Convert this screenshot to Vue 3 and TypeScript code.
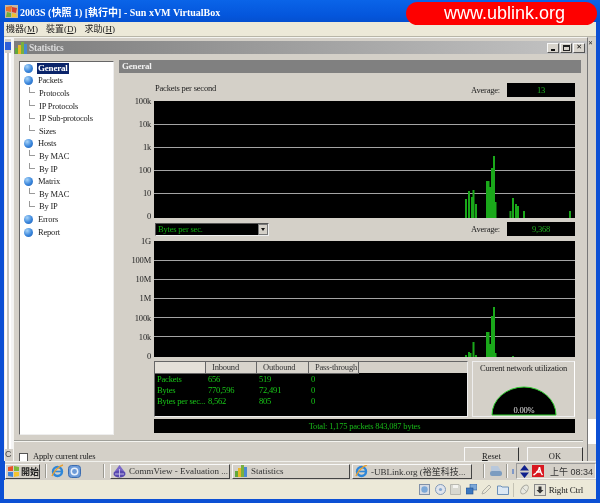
<template>
  <div class="vbox">
    <div class="titlebar">
      <svg class="title-icon" width="13" height="13" viewBox="0 0 13 13">
        <rect width="13" height="13" fill="#c8b8a0" />
        <path d="M1 2 L7 1 L6 7 L1 6 Z" fill="#e8742c" />
        <path d="M7 2 L12 3 L11 8 L7 7 Z" fill="#d83c30" />
        <path d="M2 7 L6 8 L6 12 L1 12 Z" fill="#6fae3c" />
        <path d="M7 8 L11 9 L12 12 L7 12 Z" fill="#f0c030" />
      </svg>
      <span class="title-text">2003S (快照 1) [執行中] - Sun xVM VirtualBox</span>
      <div class="pill">www.ublink.org</div>
    </div>

    <div class="menubar">
      <span v-for="m in menus" :key="m.label" class="menu-item">{{ m.label }}(<u>{{ m.key }}</u>)</span>
    </div>

    <div class="desktop">
      <div class="left-strip">
        <div class="strip-icon"></div>
        <div class="strip-track"></div>
        <div class="strip-c">C</div>
      </div>

      <div class="stats">
        <div class="stats-title">
          <svg width="13" height="12" viewBox="0 0 13 12">
            <rect x="0" y="6" width="3" height="6" fill="#62a83a" />
            <rect x="3" y="3" width="3" height="9" fill="#e8b828" />
            <rect x="6" y="0" width="3" height="12" fill="#78b040" />
            <rect x="9" y="2" width="3" height="10" fill="#4a8ad0" />
          </svg>
          <span class="stats-title-text">Statistics</span>
          <div class="win-buttons">
            <span class="win-btn"><i class="min"></i></span>
            <span class="win-btn"><i class="max"></i></span>
            <span class="win-btn close">✕</span>
          </div>
        </div>

        <div class="stats-body">
          <ul class="tree">
            <li v-for="n in tree" :key="n.id" class="tree-row" :class="{ child: n.child }">
              <span v-if="!n.child" class="bullet"></span>
              <span v-else class="connector"></span>
              <span class="tree-label" :class="{ selected: n.selected }">{{ n.label }}</span>
            </li>
          </ul>

          <div class="main">
            <div class="section-head">General</div>

            <div class="control-row first">
              <span class="chart-title">Packets per second</span>
              <span class="avg-label">Average:</span>
              <span class="avg-box">13</span>
            </div>
            <div class="chart-row chart-a">
              <div class="axis"><span v-for="t in charts[0].ticks" :key="t">{{ t }}</span></div>
              <svg class="plot" width="421" :height="charts[0].height">
                <line v-for="y in charts[0].grid" :key="y" x1="0" x2="421" :y1="y" :y2="y" class="grid" />
                <rect v-for="b in charts[0].bars" :key="b.x" :x="b.x" :y="b.y" :width="b.w" :height="b.h" class="bar" />
              </svg>
            </div>

            <div class="control-row">
              <div class="combo">
                <span>Bytes per sec.</span>
                <span class="combo-btn"><i></i></span>
              </div>
              <span class="avg-label">Average:</span>
              <span class="avg-box">9,368</span>
            </div>
            <div class="chart-row chart-b">
              <div class="axis"><span v-for="t in charts[1].ticks" :key="t">{{ t }}</span></div>
              <svg class="plot" width="421" :height="charts[1].height">
                <line v-for="y in charts[1].grid" :key="y" x1="0" x2="421" :y1="y" :y2="y" class="grid" />
                <rect v-for="b in charts[1].bars" :key="b.x" :x="b.x" :y="b.y" :width="b.w" :height="b.h" class="bar" />
              </svg>
            </div>

            <div class="lower">
              <div class="traffic">
                <div class="traffic-head">
                  <span></span><span>Inbound</span><span>Outbound</span><span>Pass-through</span>
                </div>
                <div v-for="r in traffic" :key="r[0]" class="traffic-row">
                  <span v-for="(c, i) in r" :key="i">{{ c }}</span>
                </div>
              </div>
              <div class="util">
                <div class="util-title">Current network utilization</div>
                <svg class="gauge" width="66" height="30" viewBox="0 0 66 30">
                  <path d="M1 29 A32 28 0 0 1 65 29 Z" fill="#000" stroke="#2fd02f" stroke-width="1" />
                  <text x="33" y="27" text-anchor="middle" class="gauge-text">0.00%</text>
                </svg>
              </div>
            </div>
            <div class="total">Total: 1,175 packets 843,087 bytes</div>
          </div>
        </div>

        <div class="stats-footer">
          <span class="checkbox"></span>
          <span class="apply">Apply current rules</span>
          <button class="btn reset"><u>R</u>eset</button>
          <button class="btn ok">OK</button>
        </div>
      </div>

      <div class="right-strip">
        <span class="back-close">✕</span>
        <div class="back-white"></div>
      </div>
    </div>

    <div class="taskbar">
      <div class="start">
        <svg width="11" height="11" viewBox="0 0 11 11">
          <path d="M0 1 L5 0 L5 5 L0 5 Z" fill="#e8562a" />
          <path d="M6 0 L11 1 L11 5 L6 5 Z" fill="#7cb83a" />
          <path d="M0 6 L5 6 L5 11 L0 10 Z" fill="#3f84d8" />
          <path d="M6 6 L11 6 L11 10 L6 11 Z" fill="#f4c430" />
        </svg>
        <span>開始</span>
      </div>
      <span class="divider first-div"></span>
      <svg class="ql" width="13" height="14" viewBox="0 0 13 14">
        <ellipse cx="6.5" cy="7.5" rx="4.5" ry="4.5" fill="none" stroke="#2e86d8" stroke-width="2.4" />
        <path d="M2.5 7.5 H10" stroke="#2e86d8" stroke-width="1.6" />
        <path d="M1 12 C3 7 8 2 12 1" fill="none" stroke="#e8a030" stroke-width="1.3" />
      </svg>
      <svg class="ql" width="13" height="13" viewBox="0 0 13 13">
        <rect x="0.5" y="0.5" width="12" height="12" rx="3" fill="#6c9ad8" stroke="#3c6cb0" />
        <circle cx="6.5" cy="6.5" r="3.2" fill="none" stroke="#e8f0fc" stroke-width="1.5" />
      </svg>
      <span class="divider second-div"></span>
      <div class="task task-a">
        <svg width="13" height="13" viewBox="0 0 13 13">
          <path d="M6.5 0 L12.5 8 H0.5 Z" fill="#7a68c8" />
          <ellipse cx="6.5" cy="9" rx="6" ry="3.4" fill="#5848b0" />
          <path d="M2 9 H11 M6.5 4 V12" stroke="#d8d4f0" stroke-width="0.8" />
        </svg>
        <span>CommView - Evaluation ...</span>
      </div>
      <div class="task task-b">
        <svg width="13" height="12" viewBox="0 0 13 12">
          <rect x="0" y="6" width="3" height="6" fill="#62a83a" />
          <rect x="3" y="3" width="3" height="9" fill="#e8b828" />
          <rect x="6" y="0" width="3" height="12" fill="#78b040" />
          <rect x="9" y="2" width="3" height="10" fill="#4a8ad0" />
        </svg>
        <span>Statistics</span>
      </div>
      <div class="task task-c">
        <svg width="13" height="14" viewBox="0 0 13 14">
          <ellipse cx="6.5" cy="7.5" rx="4.5" ry="4.5" fill="none" stroke="#2e86d8" stroke-width="2.4" />
          <path d="M2.5 7.5 H10" stroke="#2e86d8" stroke-width="1.6" />
          <path d="M1 12 C3 7 8 2 12 1" fill="none" stroke="#e8a030" stroke-width="1.3" />
        </svg>
        <span>-UBLink.org (裕笙科技...</span>
      </div>
      <span class="divider third-div"></span>
      <svg class="printer" width="14" height="12" viewBox="0 0 14 12">
        <path d="M2 1 H9 L12 6 H2 Z" fill="#b8c8dc" />
        <rect x="1" y="6" width="12" height="5" rx="2" fill="#7c9cc0" />
      </svg>
      <span class="divider fourth-div"></span>
      <span class="tray-dot"></span>
      <div class="tray">
        <svg width="9" height="13" viewBox="0 0 9 13">
          <path d="M4.5 0 L9 5.5 H0 Z M0 7.5 H9 L4.5 13 Z" fill="#10208c" />
        </svg>
        <svg class="avira" width="12" height="12" viewBox="0 0 12 12">
          <rect width="12" height="12" fill="#d81820" />
          <path d="M1.5 10 C5 8 7 5 7.5 2 C8 5 8.5 8 10.5 10 M4 7 H9" fill="none" stroke="#fff" stroke-width="1.5" />
        </svg>
        <span class="clock">上午 08:34</span>
      </div>
    </div>

    <div class="statusbar">
      <svg width="11" height="11" viewBox="0 0 11 11">
        <rect x="0.5" y="0.5" width="10" height="10" fill="#d8dce4" stroke="#8090a8" />
        <circle cx="5.5" cy="5.5" r="3.2" fill="#7ca8d8" />
      </svg>
      <svg width="11" height="11" viewBox="0 0 11 11">
        <circle cx="5.5" cy="5.5" r="5" fill="#dfe4ec" stroke="#8098b8" />
        <circle cx="5.5" cy="5.5" r="1.6" fill="#88a8d0" />
      </svg>
      <svg width="11" height="11" viewBox="0 0 11 11">
        <path d="M0.5 0.5 H9 L10.5 2 V10.5 H0.5 Z" fill="#d8d8d0" stroke="#b8b8b0" />
        <rect x="3" y="1" width="5" height="3" fill="#f4f4f0" />
      </svg>
      <svg width="11" height="11" viewBox="0 0 11 11">
        <rect x="4" y="0" width="7" height="6" fill="#7ca8d8" stroke="#2c5c9c" stroke-width="0.6" />
        <rect x="0" y="4" width="7" height="6" fill="#3c78c0" stroke="#1c4c8c" stroke-width="0.6" />
      </svg>
      <svg width="11" height="11" viewBox="0 0 11 11">
        <path d="M1 10 L2 7 L8 1 L10 3 L4 9 Z" fill="none" stroke="#b0b0a8" />
      </svg>
      <svg width="12" height="11" viewBox="0 0 12 11">
        <path d="M0.5 2 H4 L5 3 H11.5 V10.5 H0.5 Z" fill="#dce8f4" stroke="#6c90b8" />
      </svg>
      <span class="status-sep"></span>
      <svg width="11" height="11" viewBox="0 0 11 11">
        <ellipse cx="5.5" cy="5.5" rx="3" ry="5" transform="rotate(35 5.5 5.5)" fill="#e8e8e0" stroke="#a8a8a0" />
        <path d="M3 3 L8 8" stroke="#a8a8a0" stroke-width="0.7" />
      </svg>
      <svg class="capture" width="12" height="12" viewBox="0 0 12 12">
        <rect x="0.5" y="0.5" width="11" height="11" fill="#e4e2d8" stroke="#888" />
        <path d="M4.5 2.5 H7.5 V6 H9.5 L6 9.5 L2.5 6 H4.5 Z" fill="#333" />
      </svg>
      <span class="right-ctrl">Right Ctrl</span>
    </div>
  </div>
</template>

<script setup lang="ts">
interface Bar {
  x: number;
  y: number;
  w: number;
  h: number;
}

const menus = [
  { label: '機器', key: 'M' },
  { label: '裝置', key: 'D' },
  { label: '求助', key: 'H' },
];

const treeRows: Array<[string, boolean]> = [
  ['General', false],
  ['Packets', false],
  ['Protocols', true],
  ['IP Protocols', true],
  ['IP Sub-protocols', true],
  ['Sizes', true],
  ['Hosts', false],
  ['By MAC', true],
  ['By IP', true],
  ['Matrix', false],
  ['By MAC', true],
  ['By IP', true],
  ['Errors', false],
  ['Report', false],
];

const tree = treeRows.map(([label, child], id) => ({ id, label, child, selected: id === 0 }));

// bars are [left edge in the plot, height]
const makeBars = (list: Array<[number, number]>, bottom: number): Bar[] =>
  list.map(([x, h]) => ({ x, y: bottom - h, w: 2, h }));

const charts = [
  {
    height: 117,
    ticks: ['100k', '10k', '1k', '100', '10', '0'],
    grid: [23.5, 46.5, 69.5, 92.5],
    bars: makeBars(
      [
        [311, 19], [314, 27], [317, 21], [318.5, 28], [321, 14], [332, 37], [333.5, 37],
        [335, 31], [337, 50], [339, 62], [340.5, 16], [355.5, 7], [358, 20], [361, 14],
        [363, 12], [369, 7], [415, 7],
      ],
      117,
    ),
  },
  {
    height: 116,
    ticks: ['1G', '100M', '10M', '1M', '100k', '10k', '0'],
    grid: [19.5, 38.5, 57.5, 76.5, 95.5],
    bars: makeBars(
      [
        [311, 2], [314, 5], [315.5, 4], [318.5, 15], [321, 2], [332, 25], [333.5, 25],
        [335, 13], [337, 41], [339, 50], [340.5, 4], [358, 1],
      ],
      116,
    ),
  },
];

const traffic = [
  ['Packets', '656', '519', '0'],
  ['Bytes', '770,596', '72,491', '0'],
  ['Bytes per sec...', '8,562', '805', '0'],
];
</script>

<style>
html, body {
  margin: 0;
  background: #1050d0;
}
</style>

<style scoped>
.vbox {
  width: 600px;
  height: 503px;
  box-sizing: border-box;
  padding: 0 4px 3px;
  background: #0c50d4;
  display: flex;
  flex-direction: column;
  overflow: hidden;
  font-family: "Liberation Serif", "Noto Sans CJK TC", serif;
  font-size: 8.5px;
  letter-spacing: -0.2px;
  color: #222;
  filter: blur(0.3px);
}

svg {
  flex: none;
}

.titlebar {
  height: 22px;
  flex: none;
  margin: 0 -4px;
  padding-left: 5px;
  display: flex;
  align-items: center;
  gap: 2px;
  position: relative;
  background: linear-gradient(#0a64e8, #0456dc 70%, #0450d0);
}

.title-text {
  color: #fff;
  font-weight: bold;
  font-size: 10px;
  letter-spacing: 0;
  white-space: nowrap;
}

.pill {
  position: absolute;
  left: 406px;
  top: 2px;
  width: 191px;
  height: 23px;
  border-radius: 12px;
  background: #fe0000;
  color: #fff;
  font-family: "Liberation Sans", sans-serif;
  font-size: 18px;
  letter-spacing: 0;
  line-height: 23px;
  text-align: center;
  z-index: 2;
  text-indent: 6px;
}

.menubar {
  height: 15px;
  flex: none;
  display: flex;
  gap: 8px;
  align-items: center;
  padding: 0 0 2px 2px;
  box-sizing: border-box;
  background: #ece9d8;
  border-bottom: 1px solid #b8b6a8;
  font-size: 9px;
  letter-spacing: 0;
}

.desktop {
  height: 424px;
  flex: none;
  display: flex;
  background: #d4d0c8;
  overflow: hidden;
}

.left-strip {
  width: 9px;
  flex: none;
  display: flex;
  flex-direction: column;
  background: #f4f4f4;
  border-left: 1px solid #eee;
  box-sizing: border-box;
}

.strip-icon {
  height: 14px;
  margin: 2px 2px 0 0;
  background: linear-gradient(#d4d0c8 3px, #3060d8 3px, #3060d8 11px, #d4d0c8 11px);
}

.strip-track {
  flex: 1;
  margin-right: 2px;
  background: linear-gradient(90deg, #fff 2px, #c8c8c0 2px, #c8c8c0 4px, #fff 4px);
}

.strip-c {
  height: 12px;
  background: #d4d0c8;
  font-size: 9px;
  color: #444;
  font-family: "Liberation Sans", sans-serif;
}

.stats {
  width: 575px;
  flex: none;
  height: 424px;
  overflow: hidden;
  box-sizing: border-box;
  padding-top: 3px;
  background: #d4d0c8;
  border-top: 1px solid #f4f4f0;
  border-left: 1px solid #f4f4f0;
  border-right: 1px solid #777;
  display: flex;
  flex-direction: column;
}

.stats-title {
  height: 13px;
  flex: none;
  display: flex;
  align-items: center;
  padding-left: 1px;
  gap: 1px;
  background: linear-gradient(90deg, #7c7c7c, #c4c4c4);
}

.stats-title-text {
  color: #dcdcdc;
  font-weight: bold;
  font-size: 9.5px;
}

.win-buttons {
  margin-left: auto;
  margin-right: 2px;
  display: flex;
  gap: 1px;
}

.win-btn {
  width: 12px;
  height: 10px;
  background: #d8d4cc;
  border: 1px solid;
  border-color: #f8f8f8 #555 #555 #f8f8f8;
  box-sizing: border-box;
  display: flex;
  align-items: center;
  justify-content: center;
  font-size: 7px;
  line-height: 1;
  color: #111;
  font-family: "DejaVu Sans", sans-serif;
}

.win-btn .min {
  width: 4px;
  height: 2px;
  background: #111;
  margin-top: 4px;
}

.win-btn .max {
  width: 7px;
  height: 6px;
  border: 1px solid #222;
  border-top-width: 2px;
  box-sizing: border-box;
}

.stats-body {
  display: flex;
  flex: none;
  height: 386px;
}

.tree {
  width: 95px;
  height: 374px;
  flex: none;
  box-sizing: border-box;
  margin: 7px 0 0 5px;
  padding: 0;
  list-style: none;
  background: #fff;
  border: 1px solid;
  border-color: #666 #eee #eee #666;
}

.tree-row {
  height: 12.6px;
  display: flex;
  align-items: center;
  padding-left: 4px;
  white-space: nowrap;
  position: relative;
}

.bullet {
  width: 9px;
  height: 9px;
  flex: none;
  border-radius: 50%;
  margin-right: 4px;
  background: radial-gradient(circle at 35% 30%, #a8d4f8, #3a86dc 55%, #1c5cb0);
}

.connector {
  width: 6px;
  height: 6px;
  margin: -6px 3px 0 5px;
  flex: none;
  border-left: 1px solid #999;
  border-bottom: 1px solid #999;
  box-sizing: border-box;
}

.tree-label {
  padding: 0 1px;
  line-height: 11px;
  color: #222;
}

.tree-label.selected {
  background: #0a246a;
  color: #fff;
  font-weight: bold;
  font-size: 9px;
}

.main {
  width: 462px;
  margin: 6px 0 0 5px;
  flex: none;
}

.section-head {
  height: 13px;
  line-height: 13px;
  padding-left: 3px;
  background: #808080;
  color: #f0f0f0;
  font-weight: bold;
  font-size: 9px;
}

.control-row {
  margin: 4px 6px 0 36px;
  height: 14px;
  display: flex;
  align-items: center;
}

.control-row.first {
  margin-top: 10px;
}

.chart-title {
  margin-top: -4px;
}

.avg-label {
  margin-left: auto;
  margin-right: 7px;
}

.avg-box {
  width: 68px;
  height: 14px;
  line-height: 14px;
  text-align: center;
  background: #000;
  color: #20b020;
}

.combo {
  width: 114px;
  height: 13px;
  box-sizing: border-box;
  display: flex;
  align-items: center;
  justify-content: space-between;
  padding-left: 2px;
  background: #000;
  color: #10b010;
  border: 1px solid #f0f0f0;
  border-left-color: #555;
  border-top-color: #555;
}

.combo-btn {
  width: 10px;
  height: 11px;
  background: #d4d0c8;
  border: 1px solid #777;
  box-sizing: border-box;
  display: flex;
  align-items: center;
  justify-content: center;
}

.combo-btn i {
  width: 0;
  height: 0;
  border: 2px solid transparent;
  border-top: 3px solid #111;
  border-bottom: 0;
}

.chart-row {
  display: flex;
  margin-top: 4px;
}

.chart-b {
  margin-top: 5px;
}

.axis {
  width: 35px;
  flex: none;
  box-sizing: border-box;
  padding-right: 3px;
  margin: -5px 0 -3px;
  display: flex;
  flex-direction: column;
  justify-content: space-between;
  align-items: flex-end;
  line-height: 10px;
}

.chart-b .axis {
  margin-bottom: -4px;
}

.plot {
  display: block;
  background: #000;
}

.grid {
  stroke: #a4a4a4;
  stroke-width: 1;
}

.bar {
  fill: #1aa81a;
}

.lower {
  display: flex;
  margin: 4px 6px 0 35px;
  gap: 4px;
  height: 56px;
}

.traffic {
  width: 314px;
  box-sizing: border-box;
  background: #000;
  border: 1px solid;
  border-color: #666 #eee #eee #666;
  color: #18c818;
}

.traffic-head,
.traffic-row {
  display: grid;
  grid-template-columns: 51px 51px 52px 50px 1fr;
}

.traffic-head {
  height: 11px;
  line-height: 11px;
  color: #333;
  background: #d4d0c8;
  margin-bottom: 1px;
  white-space: nowrap;
}

.traffic-head span {
  padding-left: 6px;
  border-right: 1px solid #666;
  border-bottom: 1px solid #666;
  background: #d8d4cc;
}

.traffic-head span:first-child {
  background: #e4e0d8;
}

.traffic-row {
  height: 11px;
  line-height: 11px;
  white-space: nowrap;
  padding-left: 2px;
}

.util {
  width: 103px;
  box-sizing: border-box;
  border: 1px solid #eee;
  border-right-color: #fff;
  text-align: center;
  position: relative;
  display: flex;
  flex-direction: column;
  align-items: center;
}

.util-title {
  line-height: 10px;
  margin-top: 1px;
  white-space: nowrap;
}

.gauge {
  margin-top: auto;
  display: block;
}

.gauge-text {
  fill: #e0e0e0;
  font-size: 8.5px;
  font-family: "Liberation Serif", serif;
}

.total {
  margin: 2px 6px 0 35px;
  height: 14px;
  line-height: 14px;
  background: #000;
  color: #18b818;
  text-align: center;
}

.stats-footer {
  flex: none;
  margin: 0 4px 0 0;
  border-top: 1px solid #a0a09a;
  box-shadow: inset 0 1px 0 #f4f4f0;
  display: flex;
  align-items: flex-start;
  height: 40px;
  padding-left: 5px;
}

.checkbox {
  width: 9px;
  height: 9px;
  margin-top: 12px;
  flex: none;
  box-sizing: border-box;
  background: #fff;
  border: 1px solid #555;
}

.apply {
  margin: 11px 0 0 5px;
  line-height: 9px;
}

.btn {
  width: 55px;
  height: 24px;
  margin-top: 6px;
  padding: 4px 0 0;
  box-sizing: border-box;
  background: #d4d0c8;
  border: 1px solid;
  border-color: #f8f8f8 #333 #333 #f8f8f8;
  font: inherit;
  line-height: 9px;
  color: #222;
  text-align: center;
  display: block;
}

.btn.reset {
  margin-left: auto;
  display: flex;
  justify-content: center;
  align-items: flex-start;
}

.btn.ok {
  margin-left: 8px;
  width: 56px;
  display: flex;
  justify-content: center;
  align-items: flex-start;
}

.right-strip {
  flex: 1;
  position: relative;
  background: #d4d0c8;
  display: flex;
  flex-direction: column;
}

.back-close {
  height: 9px;
  margin-top: 2px;
  width: 4px;
  font-size: 6px;
  overflow: hidden;
  color: #222;
  background: #d8d4cc;
  line-height: 9px;
}

.back-white {
  margin-top: auto;
  margin-bottom: 17px;
  height: 25px;
  background: #fff;
}

.taskbar {
  height: 19px;
  flex: none;
  display: flex;
  align-items: center;
  background: #d4d0c8;
  border-top: 1px solid #f0f0ec;
  box-sizing: border-box;
  font-size: 9px;
  margin: 0 0 0 1px;
}

.start {
  width: 35px;
  height: 15px;
  box-sizing: border-box;
  display: flex;
  align-items: center;
  gap: 2px;
  padding-left: 2px;
  font-size: 9px;
  font-weight: bold;
  letter-spacing: 0;
  white-space: nowrap;
  border: 1px solid;
  border-color: #f8f8f8 #444 #444 #f8f8f8;
  flex: none;
}

.divider {
  width: 1px;
  height: 14px;
  background: #9a9890;
  box-shadow: 1px 0 0 #f8f8f8;
  flex: none;
}

.first-div {
  margin: 0 5px;
}

.ql {
  margin-right: 4px;
}

.second-div {
  margin: 0 3px 0 18px;
}

.task {
  height: 15px;
  box-sizing: border-box;
  flex: none;
  display: flex;
  align-items: center;
  gap: 3px;
  padding-left: 2px;
  border: 1px solid;
  border-color: #f8f8f8 #444 #444 #f8f8f8;
  font-size: 9px;
  letter-spacing: 0;
  white-space: nowrap;
  overflow: hidden;
  color: #333;
}

.task-a {
  width: 120px;
  margin-left: 3px;
}

.task-b {
  width: 118px;
  margin-left: 2px;
}

.task-c {
  width: 120px;
  margin-left: 2px;
}

.third-div {
  margin: 0 5px 0 11px;
}

.fourth-div {
  margin-left: 3px;
}

.tray-dot {
  width: 2px;
  height: 5px;
  background: #8098c8;
  margin-left: 5px;
  flex: none;
}

.tray {
  margin-left: 2px;
  height: 16px;
  flex: 1;
  display: flex;
  align-items: center;
  padding-left: 3px;
  gap: 3px;
  border: 1px solid;
  border-color: #999 #f4f4f0 #f4f4f0 #999;
  box-sizing: border-box;
  min-width: 0;
}

.clock {
  margin-left: 3px;
  font-family: "Liberation Sans", "Noto Sans CJK TC", sans-serif;
  white-space: nowrap;
  color: #333;
  font-size: 9px;
  letter-spacing: 0;
}

.statusbar {
  height: 19px;
  flex: none;
  display: flex;
  align-items: center;
  justify-content: flex-end;
  gap: 4.5px;
  padding-right: 13px;
  background: #ece9d8;
}

.status-sep {
  width: 1px;
  height: 14px;
  background: #c4c2b4;
}

.capture {
  margin-left: 0;
  margin-right: -2px;
}

.right-ctrl {
  font-size: 9px;
  color: #222;
}
</style>
